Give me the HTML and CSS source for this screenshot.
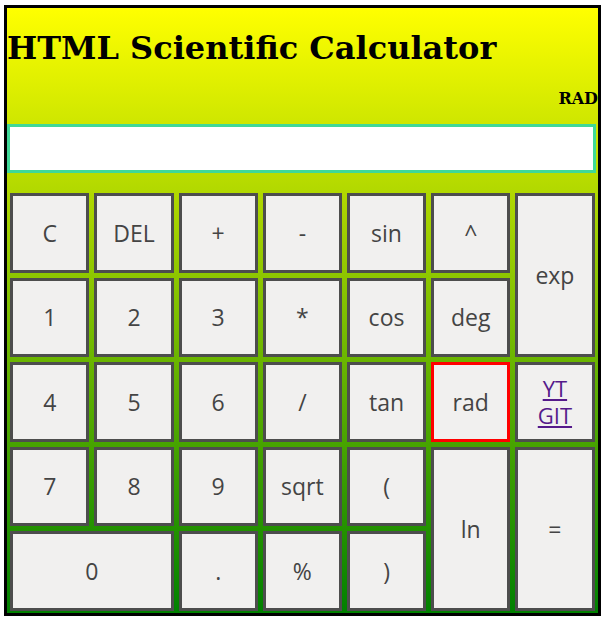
FILE: index.html
```html
<!DOCTYPE html>
<html>
<head>
<meta charset="utf-8">
<title>HTML Scientific Calculator</title>
<link rel="stylesheet" href="styles.css">
</head>
<body>
<div class="calc">
  <h1 class="title">HTML Scientific Calculator</h1>
  <div class="mode">RAD</div>
  <input class="display" type="text" value="">
  <div class="keys">
    <button class="key">C</button>
    <button class="key">DEL</button>
    <button class="key">+</button>
    <button class="key">-</button>
    <button class="key">sin</button>
    <button class="key">^</button>
    <button class="key tall">exp</button>

    <button class="key">1</button>
    <button class="key">2</button>
    <button class="key">3</button>
    <button class="key">*</button>
    <button class="key">cos</button>
    <button class="key">deg</button>

    <button class="key">4</button>
    <button class="key">5</button>
    <button class="key">6</button>
    <button class="key">/</button>
    <button class="key">tan</button>
    <button class="key active">rad</button>
    <div class="key links">
      <a href="#yt" class="link">YT</a>
      <a href="#git" class="link">GIT</a>
    </div>

    <button class="key">7</button>
    <button class="key">8</button>
    <button class="key">9</button>
    <button class="key">sqrt</button>
    <button class="key">(</button>
    <button class="key tall">ln</button>
    <button class="key tall">=</button>

    <button class="key wide">0</button>
    <button class="key">.</button>
    <button class="key">%</button>
    <button class="key">)</button>
  </div>
</div>
</body>
</html>
```
FILE: styles.css
```css
html, body {
  margin: 0;
  padding: 0;
  background: #ffffff;
}

.calc {
  margin: 5px 6px 5px 4px;
  border: 3px solid #000000;
  background: linear-gradient(to bottom, #ffff00, #008000);
}

.title {
  margin: 21.5px 0 0 0;
  font-family: "DejaVu Serif", serif;
  font-weight: bold;
  font-size: 32px;
  line-height: 37px;
  color: #000;
}

.mode {
  margin-top: 22.5px;
  text-align: right;
  font-family: "DejaVu Serif", serif;
  font-weight: bold;
  font-size: 16px;
  line-height: 19px;
  color: #000;
}

.display {
  display: block;
  box-sizing: border-box;
  margin: 16px 0 0 0;
  width: 589px;
  height: 49px;
  border: 3px solid #40d898;
  background: #ffffff;
  outline: none;
  padding: 0 6px;
  font-family: "Open Sans", sans-serif;
  font-size: 22px;
}

.keys {
  display: grid;
  grid-template-columns: repeat(7, 1fr);
  grid-auto-rows: 79.5px;
  gap: 5px;
  padding: 20px 3.5px 2.5px 3.2px;
}

.key {
  box-sizing: border-box;
  width: 100%;
  height: 100%;
  margin: 0;
  padding: 0;
  border: 3px solid #4d4d4d;
  border-radius: 0;
  background: #f1f0ef;
  color: #444444;
  font-family: "Open Sans", sans-serif;
  font-size: 23px;
  cursor: pointer;
}

.tall {
  grid-row: span 2;
}

.wide {
  grid-column: span 2;
}

.active {
  border-color: #ff0000;
}

.links {
  display: flex;
  flex-direction: column;
  align-items: center;
  justify-content: center;
  gap: 0;
}

.link {
  display: block;
  height: 27px;
  overflow: visible;
  color: #551a8b;
  font-size: 22px;
  line-height: 27px;
  text-decoration: underline;
  text-decoration-thickness: 2px;
  text-underline-offset: 2px;
}
```
